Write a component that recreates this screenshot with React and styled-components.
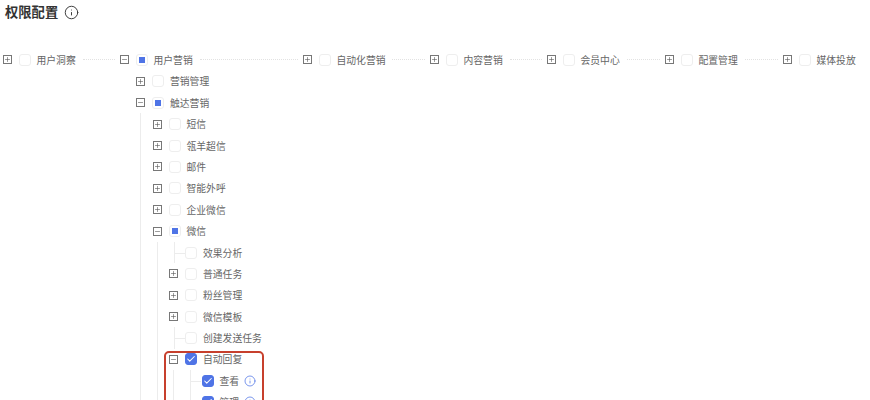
import styled, { createGlobalStyle } from "styled-components";
import { Check, Info, Minus, Plus } from "lucide-react";

const GlobalStyle = createGlobalStyle`
  html, body {
    margin: 0;
    height: 400px;
    overflow: hidden;
    background: #fff;
    font-family: "Noto Sans CJK SC", "Noto Sans", sans-serif;
  }
`;

const Page = styled.div`
  width: 870px;
  height: 400px;
  overflow: hidden;
`;

const TitleBar = styled.div`
  display: flex;
  align-items: center;
  gap: 6px;
  height: 24px;
  padding-left: 5px;
  margin-bottom: 25.3px;
  color: #333;
`;

const Title = styled.h1`
  margin: 0;
  font-size: 13.3px;
  font-weight: 700;
  line-height: 24px;
`;

const Tree = styled.div`
  display: flex;
  margin-left: -1px;
`;

const TopItem = styled.div`
  flex: none;
  width: ${(props) => props.$width}px;
`;

const Row = styled.div`
  display: flex;
  align-items: center;
  height: 21.4px;
`;

const Switcher = styled.span`
  position: relative;
  flex: none;
  display: flex;
  align-items: center;
  justify-content: center;
  width: 16px;
  height: 100%;
  margin-right: 3.5px;

  ${(props) =>
    props.$leaf &&
    `
    &::before {
      content: "";
      position: absolute;
      left: 8px;
      top: 0;
      bottom: 0;
      border-left: 1px solid #ececec;
    }
    &::after {
      content: "";
      position: absolute;
      left: 8px;
      top: 50%;
      width: 11px;
      border-top: 1px solid #ececec;
    }
  `}
`;

const Expander = styled.span`
  display: flex;
  align-items: center;
  justify-content: center;
  box-sizing: border-box;
  width: 9px;
  height: 9px;
  border: 1px solid #777;
  color: #555;
`;

const Checkbox = styled.span`
  position: relative;
  flex: none;
  display: flex;
  align-items: center;
  justify-content: center;
  box-sizing: border-box;
  width: 12px;
  height: 12px;
  border-radius: 3px;
  border: 1px solid ${(props) => (props.$state === "all" ? "#4f74e6" : "#eeeeee")};
  background: ${(props) => (props.$state === "all" ? "#4f74e6" : "#fff")};
  color: #fff;
`;

const HalfMark = styled.span`
  width: 6px;
  height: 6px;
  background: #4f74e6;
`;

const Label = styled.span`
  flex: none;
  margin-left: 6px;
  font-size: 9.8px;
  line-height: 14px;
  color: #666;
`;

const DottedLine = styled.span`
  flex: 1;
  min-width: 0;
  margin: 0 1px 0 7px;
  border-top: 1px dotted #e2e2e2;
`;

const InfoMark = styled.span`
  display: flex;
  margin-left: 5px;
  color: #4f74e6;
`;

const Children = styled.div`
  margin-left: 7.5px;
  padding-left: 8px;
  border-left: 1px solid ${(props) => (props.$line ? "#ececec" : "transparent")};
`;

const Node = styled.div`
  position: relative;

  ${(props) =>
    props.$marked &&
    `
    &::after {
      content: "";
      position: absolute;
      left: -2px;
      top: 2px;
      width: 100px;
      height: 70px;
      box-sizing: border-box;
      border: 2.5px solid #c7402d;
      border-radius: 5px;
    }
  `}
`;

const wechat = {
  label: "微信",
  state: "half",
  open: true,
  line: true,
  children: [
    { label: "效果分析", leaf: true },
    { label: "普通任务" },
    { label: "粉丝管理" },
    { label: "微信模板" },
    { label: "创建发送任务", leaf: true },
    {
      label: "自动回复",
      state: "all",
      open: true,
      marked: true,
      line: true,
      children: [
        { label: "查看", state: "all", leaf: true, info: true },
        { label: "管理", state: "all", leaf: true, info: true },
      ],
    },
  ],
};

const topItems = [
  { label: "用户洞察", width: 117 },
  {
    label: "用户营销",
    width: 183,
    state: "half",
    open: true,
    children: [
      { label: "营销管理" },
      {
        label: "触达营销",
        state: "half",
        open: true,
        line: true,
        children: [
          { label: "短信" },
          { label: "瓴羊超信" },
          { label: "邮件" },
          { label: "智能外呼" },
          { label: "企业微信" },
          wechat,
        ],
      },
    ],
  },
  { label: "自动化营销", width: 127 },
  { label: "内容营销", width: 117 },
  { label: "会员中心", width: 118 },
  { label: "配置管理", width: 118 },
  { label: "媒体投放", width: 90, last: true },
];

const NodeRow = ({ node, top }) => (
  <Row>
    <Switcher $leaf={node.leaf}>
      {!node.leaf && (
        <Expander>
          {node.open ? <Minus size={7} strokeWidth={2} /> : <Plus size={7} strokeWidth={2} />}
        </Expander>
      )}
    </Switcher>
    <Checkbox $state={node.state}>
      {node.state === "half" && <HalfMark />}
      {node.state === "all" && <Check size={10} strokeWidth={2.5} />}
    </Checkbox>
    <Label>{node.label}</Label>
    {node.info && (
      <InfoMark>
        <Info size={12} strokeWidth={1.5} />
      </InfoMark>
    )}
    {top && !node.last && <DottedLine />}
  </Row>
);

const TreeNode = ({ node, top }) => (
  <Node $marked={node.marked}>
    <NodeRow node={node} top={top} />
    {node.children && (
      <Children $line={node.line}>
        {node.children.map((child) => (
          <TreeNode key={child.label} node={child} />
        ))}
      </Children>
    )}
  </Node>
);

const App = () => (
  <Page>
    <GlobalStyle />
    <TitleBar>
      <Title>权限配置</Title>
      <Info size={15} strokeWidth={1.5} />
    </TitleBar>
    <Tree>
      {topItems.map((item) => (
        <TopItem key={item.label} $width={item.width}>
          <TreeNode node={item} top />
        </TopItem>
      ))}
    </Tree>
  </Page>
);

export default App;
